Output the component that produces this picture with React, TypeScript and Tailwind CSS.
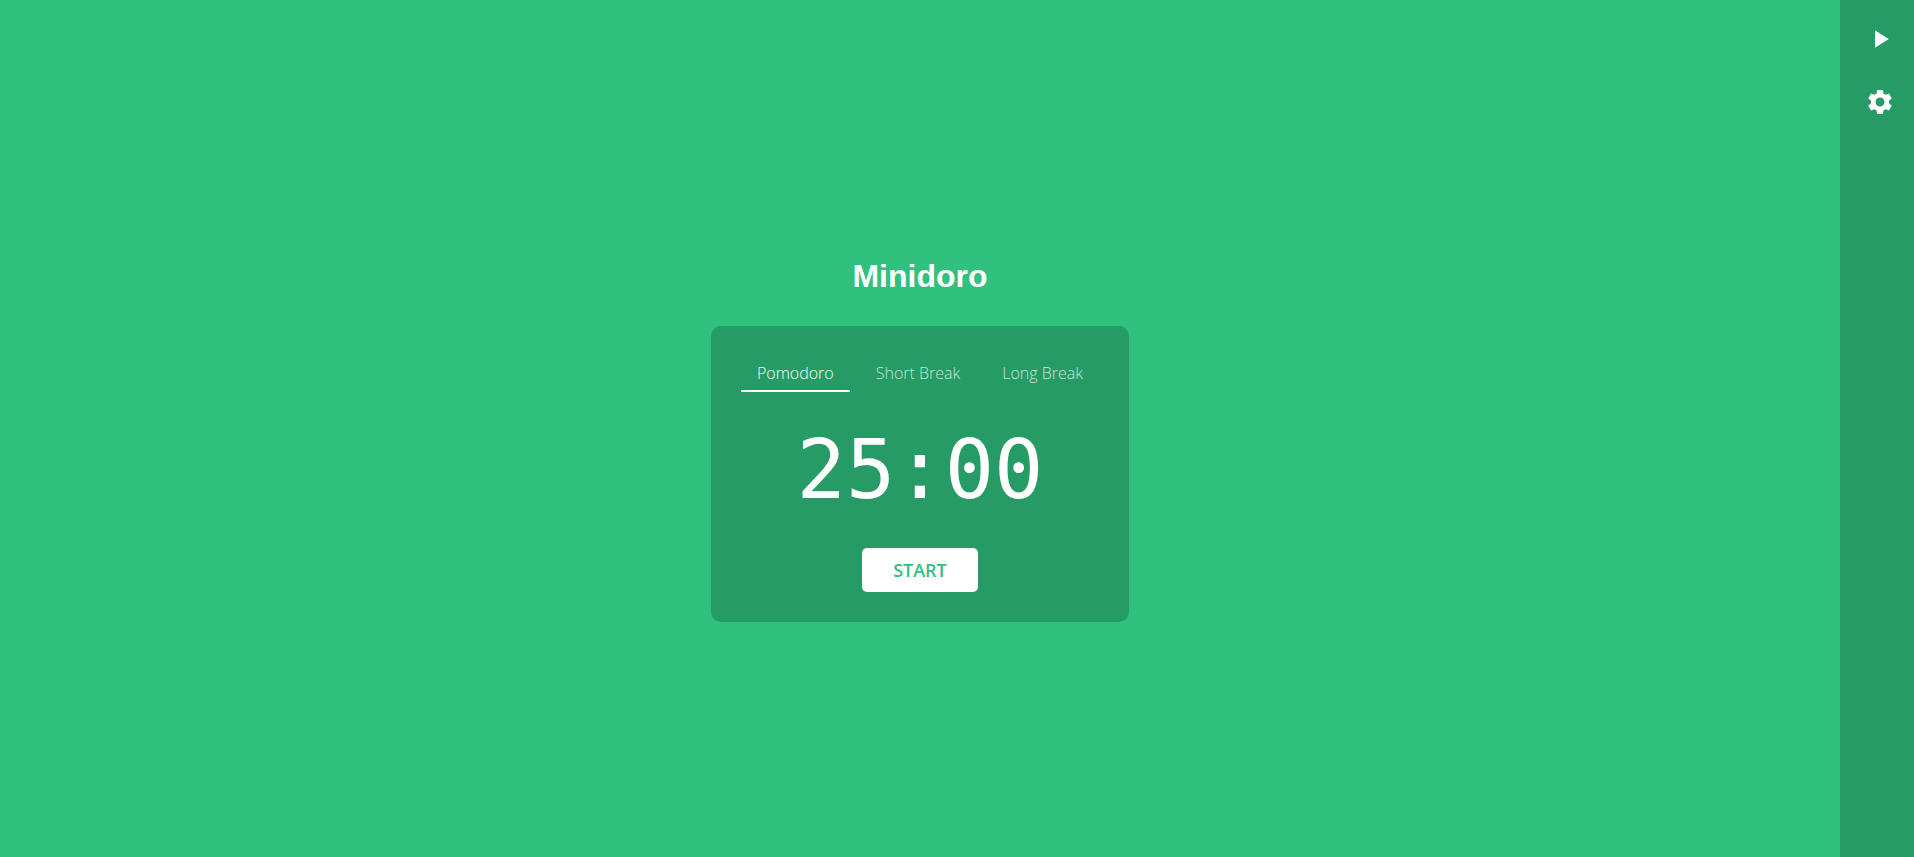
import { useState } from "react";
import { MdPlayArrow, MdSettings } from "react-icons/md";

const modes = [
  { name: "Pomodoro", time: "25:00" },
  { name: "Short Break", time: "05:00" },
  { name: "Long Break", time: "15:00" },
];

export default function App() {
  const [mode, setMode] = useState(0);
  const [running, setRunning] = useState(false);

  return (
    <div className="flex min-h-screen bg-[#30c17e] text-white">
      <main className="flex flex-1 flex-col items-center justify-center">
        <h1 className="mt-5 mb-[30px] font-['Liberation_Sans',sans-serif] text-[32px] leading-10 font-bold">
          Minidoro
        </h1>
        <section className="flex flex-col items-center gap-[30px] rounded-[10px] bg-[#269b65] p-[30px]">
          <div role="tablist" className="flex gap-2.5 font-['Open_Sans',sans-serif] text-base leading-6 font-light">
            {modes.map((item, index) => (
              <button
                key={item.name}
                type="button"
                role="tab"
                aria-selected={index === mode}
                onClick={() => setMode(index)}
                className={
                  index === mode
                    ? "border-b-2 border-white px-4 py-[5px]"
                    : "border-b-2 border-transparent px-4 py-[5px] text-white/75"
                }
              >
                {item.name}
              </button>
            ))}
          </div>
          <time className="font-['DejaVu_Sans_Mono',monospace] text-[82px] leading-[96px]">
            {modes[mode].time}
          </time>
          <button
            type="button"
            onClick={() => setRunning(!running)}
            className="h-11 w-[116px] rounded-[5px] bg-white font-['Open_Sans',sans-serif] text-lg leading-6 font-semibold text-[#30c17e]"
          >
            {running ? "STOP" : "START"}
          </button>
        </section>
      </main>
      <aside className="flex w-[74px] flex-col gap-[33px] bg-[#269b65] py-6 pl-[25px]">
        <button type="button" aria-label="Play" className="size-[30px]">
          <MdPlayArrow size={30} />
        </button>
        <button type="button" aria-label="Settings" className="size-[30px]">
          <MdSettings size={30} />
        </button>
      </aside>
    </div>
  );
}
